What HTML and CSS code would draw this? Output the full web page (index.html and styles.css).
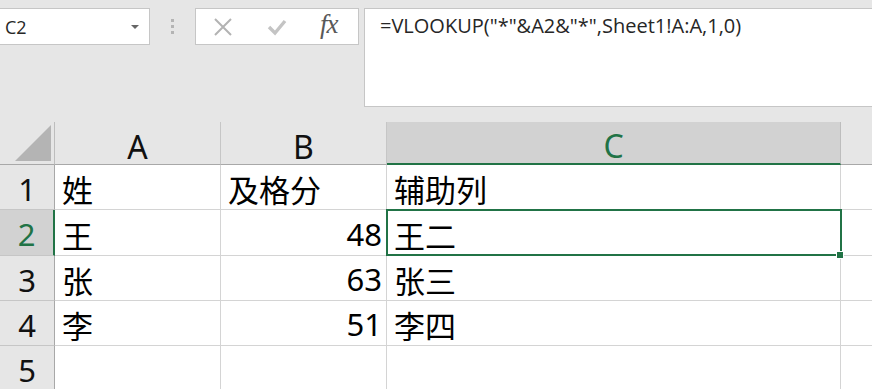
FILE: index.html
```html
<!DOCTYPE html>
<html lang="zh">
<head>
<meta charset="utf-8">
<link rel="stylesheet" href="styles.css">
</head>
<body>
<div class="app">
  <div class="toolbar">
    <div class="namebox">
      <span class="name">C2</span>
      <span class="caret"></span>
    </div>
    <div class="grip"><i></i><i></i><i></i></div>
    <div class="controls">
      <svg class="ico" width="22" height="22" viewBox="0 0 22 22"><path d="M3 3 L19 19 M19 3 L3 19" stroke="#b3b3b3" stroke-width="2" fill="none"/></svg>
      <svg class="ico" width="22" height="22" viewBox="0 0 22 22"><path d="M3 11 L9 17 L19 5" stroke="#c4c4c4" stroke-width="3.4" fill="none"/></svg>
      <span class="fx">fx</span>
    </div>
    <div class="formula">=VLOOKUP("*"&amp;A2&amp;"*",Sheet1!A:A,1,0)</div>
  </div>
  <div class="sheet">
    <div class="corner"><span class="tri"></span></div>
    <div class="ch">A</div>
    <div class="ch">B</div>
    <div class="ch sel">C</div>
    <div class="ch last"></div>

    <div class="rh">1</div>
    <div class="cell">姓</div>
    <div class="cell">及格分</div>
    <div class="cell">辅助列</div>
    <div class="cell last"></div>

    <div class="rh sel">2</div>
    <div class="cell">王</div>
    <div class="cell num">48</div>
    <div class="cell active">王二<span class="handle"></span></div>
    <div class="cell last"></div>

    <div class="rh">3</div>
    <div class="cell">张</div>
    <div class="cell num">63</div>
    <div class="cell">张三</div>
    <div class="cell last"></div>

    <div class="rh">4</div>
    <div class="cell">李</div>
    <div class="cell num">51</div>
    <div class="cell">李四</div>
    <div class="cell last"></div>

    <div class="rh">5</div>
    <div class="cell"></div>
    <div class="cell"></div>
    <div class="cell"></div>
    <div class="cell last"></div>
  </div>
</div>
</body>
</html>
```
FILE: styles.css
```css
* { box-sizing: border-box; }
html, body { margin: 0; padding: 0; }
body {
  width: 872px;
  height: 389px;
  overflow: hidden;
  background: #e6e6e6;
  font-family: "Noto Sans", "Noto Sans CJK SC", sans-serif;
  color: #000;
}
.app { display: flex; flex-direction: column; }
.toolbar {
  height: 122px;
  display: flex;
  align-items: flex-start;
  padding-top: 8px;
}
.namebox {
  width: 150px;
  height: 37px;
  background: #fff;
  border: 1px solid #c6c6c6;
  border-left: none;
  display: flex;
  align-items: center;
  justify-content: space-between;
  padding: 0 10px 0 5px;
}
.name { font-size: 18px; color: #262626; font-family: "Open Sans", "Noto Sans", sans-serif; }
.caret {
  width: 0; height: 0;
  border-left: 4px solid transparent;
  border-right: 4px solid transparent;
  border-top: 4px solid #666;
  margin-top: 1px;
}
.grip {
  width: 45px;
  height: 37px;
  display: flex;
  flex-direction: column;
  align-items: center;
  justify-content: center;
  gap: 3px;
}
.grip i { display: block; width: 3px; height: 3px; background: #b4b4b4; }
.controls {
  width: 164px;
  height: 37px;
  background: #fff;
  border: 1px solid #c6c6c6;
  display: flex;
  align-items: center;
  padding-left: 16px;
}
.controls .ico { display: block; }
.controls .ico:first-child { margin-right: 32px; }
.controls .ico:nth-child(2) { margin-right: 32px; }
.fx {
  font-family: "Liberation Serif", serif;
  font-style: italic;
  font-size: 27px;
  color: #595959;
  letter-spacing: -1px;
  margin-top: -5px;
}
.formula {
  margin-left: 5px;
  flex: 1;
  height: 99px;
  background: #fff;
  border: 1px solid #c6c6c6;
  border-right: none;
  padding: 3px 0 0 15px;
  font-family: "Open Sans", "Noto Sans", sans-serif;
  font-size: 20px;
  color: #262626;
  white-space: nowrap;
}
.sheet {
  display: grid;
  grid-template-columns: 55px 166px 166px 454px 1fr;
  grid-template-rows: 43px 45px 46px 45px 45px 45px;
  background: #fff;
}
.corner {
  background: #e6e6e6;
  border-right: 1px solid #bdbdbd;
  border-bottom: 1px solid #a8a8a8;
  position: relative;
}
.tri {
  position: absolute;
  right: 3px;
  bottom: 3px;
  width: 0; height: 0;
  border-left: 36px solid transparent;
  border-bottom: 36px solid #b4b4b4;
}
.ch {
  background: #e6e6e6;
  border-right: 1px solid #c6c6c6;
  border-bottom: 1px solid #a8a8a8;
  display: flex;
  align-items: center;
  justify-content: center;
  font-size: 32px;
  padding-top: 6px;
  font-family: "Noto Sans", sans-serif;
  color: #111;
}
.ch.sel {
  background: #d2d2d2;
  color: #217346;
  border-bottom: 2px solid #217346;
  border-right: 1px solid #bdbdbd;
}
.ch.last { border-right: none; }
.rh {
  background: #e6e6e6;
  border-right: 1px solid #a8a8a8;
  border-bottom: 1px solid #c6c6c6;
  display: flex;
  align-items: center;
  justify-content: center;
  font-size: 31px;
  padding-top: 3px;
  color: #111;
}
.rh.sel {
  background: #d2d2d2;
  color: #217346;
  border-right: 2px solid #217346;
}
.cell {
  border-right: 1px solid #d4d4d4;
  border-bottom: 1px solid #d4d4d4;
  font-family: "Noto Sans CJK SC", sans-serif;
  font-size: 31px;
  line-height: 1;
  display: flex;
  align-items: center;
  padding: 3px 0 0 7px;
  white-space: nowrap;
  position: relative;
}
.cell.num {
  justify-content: flex-end;
  padding: 3px 4px 0 0;
  font-family: "Noto Sans", sans-serif;
  font-size: 31px;
}
.cell.last { border-right: none; }
.cell.active::after {
  content: "";
  position: absolute;
  left: -1px;
  top: -1px;
  right: -2px;
  bottom: -1px;
  border: 2px solid #217346;
}
.handle {
  position: absolute;
  right: -4px;
  bottom: -4px;
  width: 6px;
  height: 6px;
  background: #217346;
  border: 1px solid #fff;
  z-index: 2;
  box-sizing: content-box;
}
```
